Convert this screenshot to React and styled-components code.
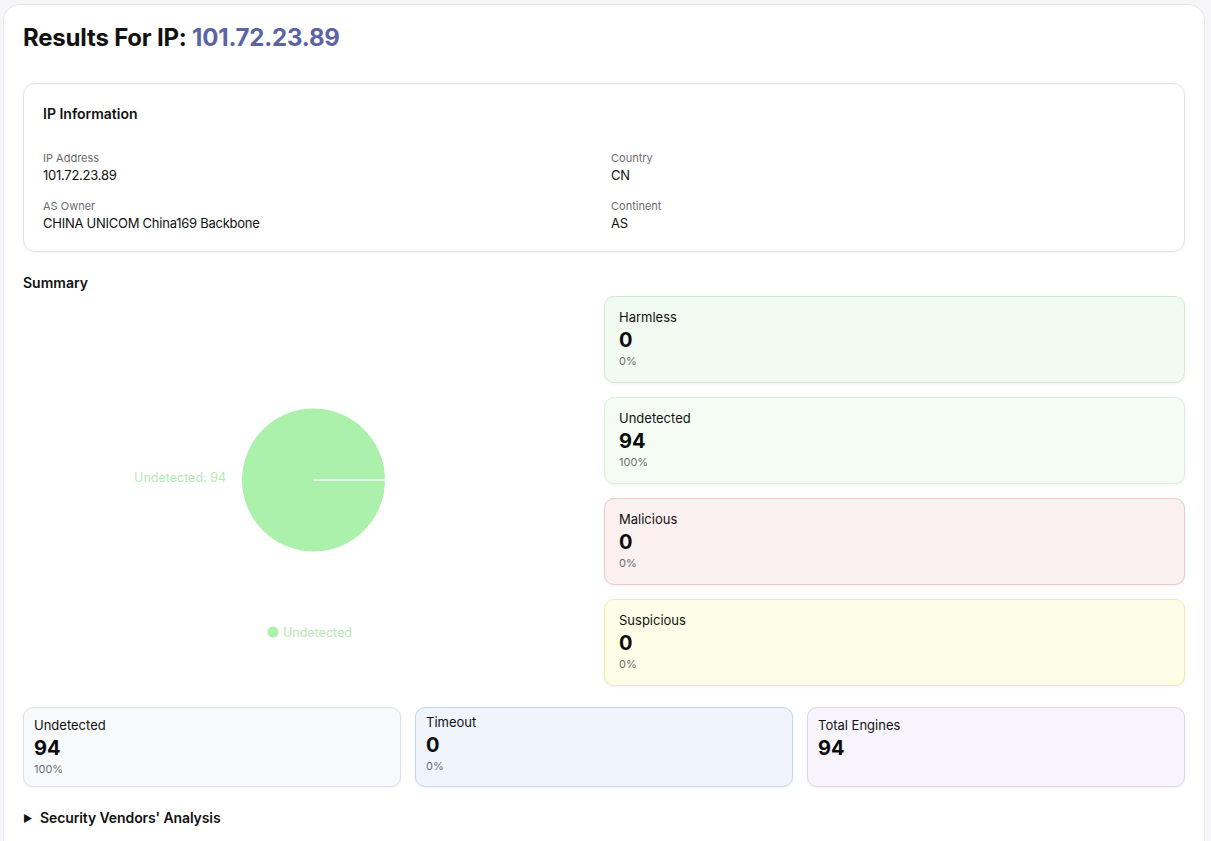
import React from "react";
import styled, { createGlobalStyle } from "styled-components";

const Global = createGlobalStyle`
  html, body { margin: 0; padding: 0; background: #f6f6f8; }
  body { font-family: Inter, "Noto Sans", "Liberation Sans", sans-serif; color: #111; }
  * { box-sizing: border-box; }
`;

const Page = styled.div`
  padding: 4px 6px 0 3px;
  min-height: 841px;
`;

const Main = styled.div`
  background: #fff;
  border: 1px solid #e6e6ea;
  border-radius: 16px;
  padding: 19px 19px 40px;
  min-height: 860px;
`;

const Title = styled.h1`
  margin: 0 0 31px;
  font-size: 24px;
  line-height: 28px;
  font-weight: 700;
  letter-spacing: -0.2px;
  color: #111;
`;

const Ip = styled.span`
  color: #5b63a5;
`;

const InfoCard = styled.section`
  border: 1px solid #e3e3e6;
  border-radius: 12px;
  padding: 19px;
  box-shadow: 0 1px 3px rgba(0, 0, 0, 0.06);
`;

const SectionTitle = styled.h2`
  margin: 0 0 ${(p) => p.$mb || 0}px;
  font-size: 14px;
  line-height: 22px;
  font-weight: 600;
`;

const InfoGrid = styled.div`
  display: grid;
  grid-template-columns: 1fr 1fr;
  column-gap: 14px;
  row-gap: 14px;
`;

const Field = styled.div`
  display: flex;
  flex-direction: column;
`;

const Label = styled.span`
  font-size: 11px;
  line-height: 16px;
  color: #6b6b70;
`;

const Value = styled.span`
  font-size: 13px;
  line-height: 18px;
  letter-spacing: -0.25px;
  color: #111;
`;

const SummaryHeading = styled.h2`
  margin: 21px 0 3px;
  font-size: 14px;
  line-height: 20px;
  font-weight: 600;
`;

const SummaryGrid = styled.div`
  display: grid;
  grid-template-columns: 1fr 1fr;
`;

const ChartBox = styled.div`
  height: 391px;
`;

const StatColumn = styled.div`
  display: flex;
  flex-direction: column;
  gap: 14px;
`;

const tones = {
  green: { bg: "#f1fbf1", border: "#cdeccd" },
  mint: { bg: "#f4fcf4", border: "#dcefdc" },
  red: { bg: "#fbf0f0", border: "#ecc8cc" },
  yellow: { bg: "#fefde8", border: "#f1eca9" },
  gray: { bg: "#f8f9fb", border: "#dfe1e6" },
  blue: { bg: "#eff4fd", border: "#c8d5ef" },
  purple: { bg: "#f7f4fd", border: "#ddd4ef" },
};

const StatCard = styled.div`
  background: ${(p) => tones[p.$tone].bg};
  border: 1px solid ${(p) => tones[p.$tone].border};
  border-radius: 10px;
  box-shadow: 0 1px 3px rgba(0, 0, 0, 0.06);
  padding: ${(p) => (p.$compact ? "8px 10px 10px" : "11px 14px 14px")};
  padding-top: ${(p) => p.$top}px;
  display: flex;
  flex-direction: column;
`;

const StatLabel = styled.span`
  font-size: 13px;
  line-height: 18px;
  color: #111;
`;

const StatValue = styled.span`
  font-size: 20px;
  line-height: 28px;
  font-weight: 700;
  color: #0a0a0a;
`;

const StatPct = styled.span`
  font-size: 11px;
  line-height: 14px;
  color: #6e6e72;
`;

const BottomRow = styled.div`
  display: grid;
  grid-template-columns: repeat(3, 1fr);
  gap: 14px;
  margin-top: 20px;
  height: 80px;
`;

const Details = styled.details`
  margin-top: 21px;
`;

const Summary = styled.summary`
  font-size: 14px;
  line-height: 20px;
  font-weight: 600;
  letter-spacing: -0.1px;
  cursor: pointer;
  list-style: none;
  display: flex;
  align-items: center;
  gap: 8px;
  &::-webkit-details-marker { display: none; }
`;

const Arrow = styled.span`
  font-size: 10px;
  line-height: 20px;
  width: 9px;
`;

const PIE = "#abf0ab";

function PieChart() {
  const cx = 290.5;
  const cy = 184;
  const r = 71.5;
  return (
    <svg width="100%" height="391" viewBox="0 0 581 391">
      <circle cx={cx} cy={cy} r={r} fill={PIE} />
      <line x1={cx} y1={cy} x2={cx + r} y2={cy} stroke="#fff" strokeWidth="1.5" />
      <text
        x="203"
        y="181"
        textAnchor="end"
        dominantBaseline="central"
        fontSize="12.5"
        fill="#b4eab4"
        fontFamily="Inter, sans-serif"
      >
        Undetected: 94
      </text>
      <circle cx="250" cy="336" r="5.5" fill={PIE} />
      <text
        x="260"
        y="336"
        dominantBaseline="central"
        fontSize="12.5"
        fill="#b4eab4"
        fontFamily="Inter, sans-serif"
      >
        Undetected
      </text>
    </svg>
  );
}

function Stat({ tone, label, value, pct, compact, top }) {
  return (
    <StatCard $tone={tone} $compact={compact} $top={top}>
      <StatLabel>{label}</StatLabel>
      <StatValue>{value}</StatValue>
      {pct && <StatPct>{pct}</StatPct>}
    </StatCard>
  );
}

export default function App() {
  return (
    <>
      <Global />
      <Page>
        <Main>
          <Title>
            Results For IP: <Ip>101.72.23.89</Ip>
          </Title>

          <InfoCard>
            <SectionTitle $mb={25}>IP Information</SectionTitle>
            <InfoGrid>
              <Field>
                <Label>IP Address</Label>
                <Value>101.72.23.89</Value>
              </Field>
              <Field>
                <Label>Country</Label>
                <Value>CN</Value>
              </Field>
              <Field>
                <Label>AS Owner</Label>
                <Value>CHINA UNICOM China169 Backbone</Value>
              </Field>
              <Field>
                <Label>Continent</Label>
                <Value>AS</Value>
              </Field>
            </InfoGrid>
          </InfoCard>

          <SummaryHeading>Summary</SummaryHeading>
          <SummaryGrid>
            <ChartBox>
              <PieChart />
            </ChartBox>
            <StatColumn>
              <Stat tone="green" label="Harmless" value="0" pct="0%" top={11} />
              <Stat tone="mint" label="Undetected" value="94" pct="100%" top={11} />
              <Stat tone="red" label="Malicious" value="0" pct="0%" top={11} />
              <Stat tone="yellow" label="Suspicious" value="0" pct="0%" top={11} />
            </StatColumn>
          </SummaryGrid>

          <BottomRow>
            <Stat tone="gray" label="Undetected" value="94" pct="100%" compact top={8} />
            <Stat tone="blue" label="Timeout" value="0" pct="0%" compact top={5} />
            <Stat tone="purple" label="Total Engines" value="94" compact top={8} />
          </BottomRow>

          <Details>
            <Summary>
              <Arrow>▶</Arrow>
              Security Vendors' Analysis
            </Summary>
          </Details>
        </Main>
      </Page>
    </>
  );
}
